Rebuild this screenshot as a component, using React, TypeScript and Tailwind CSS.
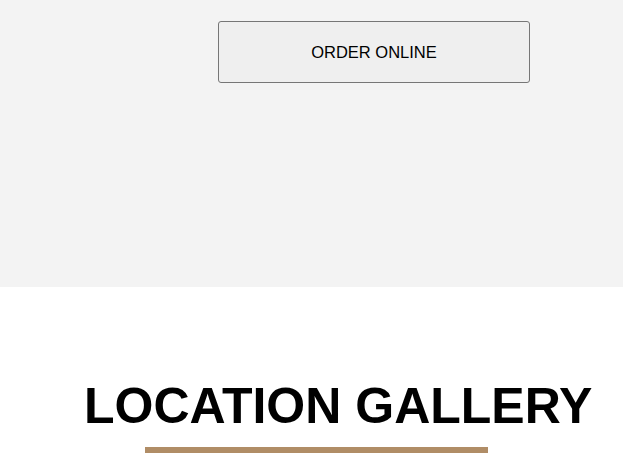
export default function App() {
  return (
    <div className="min-h-screen w-full bg-white font-['Liberation_Sans',Arial,sans-serif] overflow-hidden">
      {/* top band */}
      <section className="h-[287px] w-full bg-[#f3f3f3] pt-[21px]">
        <button className="ml-[218px] flex h-[62px] w-[312px] items-center justify-center rounded-[3px] border border-[#767676] bg-[#efefef] text-[16.5px] text-black">
          ORDER ONLINE
        </button>
      </section>

      {/* gallery heading */}
      <section className="flex flex-col pt-[89px]">
        <h2 className="ml-[84px] whitespace-nowrap text-[50px] font-bold leading-[60px] text-black">
          LOCATION GALLERY
        </h2>
        <div className="ml-[145px] mt-[11px] h-[6px] w-[343px] bg-[#b08d66]" />
      </section>
    </div>
  );
}
